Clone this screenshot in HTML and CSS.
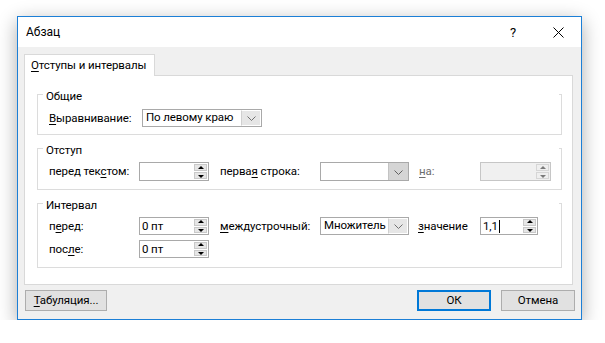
FILE: index.html
```html
<!DOCTYPE html>
<html lang="ru">
<head>
<meta charset="utf-8">
<title>Абзац</title>
<link rel="stylesheet" href="styles.css">
</head>
<body>
<div class="window">
  <div class="titlebar">
    <span class="title">Абзац</span>
    <span class="help">?</span>
    <svg class="close" width="11" height="11" viewBox="0 0 11 11"><path d="M0.5 0.5L10.5 10.5M10.5 0.5L0.5 10.5" stroke="#000" stroke-width="1" fill="none"/></svg>
  </div>
  <div class="content">
    <div class="tab"><u>О</u>тступы и интервалы</div>
    <div class="panel">
      <div class="group g1">
        <div class="legend">Общие</div>
        <div class="row r1">
          <span class="lbl l0"><u>В</u>ыравнивание:</span>
          <div class="combo c-align"><span class="val">По левому краю</span><span class="drop light"><svg width="9" height="5" viewBox="0 0 9 5"><path d="M0.5 0.5L4.5 4.5L8.5 0.5" stroke="#707070" fill="none"/></svg></span></div>
        </div>
      </div>
      <div class="group g2">
        <div class="legend">Отступ</div>
        <div class="row r2">
          <span class="lbl l1">перед тек<u>с</u>том:</span>
          <div class="spin"><span class="val"></span><span class="arrows"><span class="up"></span><span class="down"></span></span></div>
          <span class="lbl l2">перва<u>я</u> строка:</span>
          <div class="combo c-mid"><span class="val"></span><span class="drop dark"><svg width="9" height="5" viewBox="0 0 9 5"><path d="M0.5 0.5L4.5 4.5L8.5 0.5" stroke="#606060" fill="none"/></svg></span></div>
          <span class="lbl l3 disabled"><u>н</u>а:</span>
          <div class="spin wide off"><span class="val"></span><span class="arrows"><span class="up"></span><span class="down"></span></span></div>
        </div>
      </div>
      <div class="group g3">
        <div class="legend">Интервал</div>
        <div class="row r3">
          <span class="lbl l1">п<u>е</u>ред:</span>
          <div class="spin"><span class="val">0 пт</span><span class="arrows"><span class="up"></span><span class="down"></span></span></div>
          <span class="lbl l2"><u>м</u>еждустрочный:</span>
          <div class="combo c-mid"><span class="val">Множитель</span><span class="drop light"><svg width="9" height="5" viewBox="0 0 9 5"><path d="M0.5 0.5L4.5 4.5L8.5 0.5" stroke="#707070" fill="none"/></svg></span></div>
          <span class="lbl l4"><u>з</u>начение</span>
          <div class="spin narrow"><span class="val">1,1<span class="caret"></span></span><span class="arrows"><span class="up"></span><span class="down"></span></span></div>
        </div>
        <div class="row r4">
          <span class="lbl l1">пос<u>л</u>е:</span>
          <div class="spin"><span class="val">0 пт</span><span class="arrows"><span class="up"></span><span class="down"></span></span></div>
        </div>
      </div>
    </div>
    <div class="footer">
      <button class="btn tabs"><u>Т</u>абуляция...</button>
      <button class="btn ok">ОК</button>
      <button class="btn cancel">Отмена</button>
    </div>
  </div>
</div>
</body>
</html>
```

FILE: styles.css
```css
* { box-sizing: border-box; }
html, body { margin: 0; padding: 0; }
body {
  background: #ffffff;
  font-family: Roboto, "Noto Sans", sans-serif;
  font-size: 11.5px;
  letter-spacing: -0.1px;
  line-height: 15px;
  color: #000;
}
u { text-decoration: underline; text-underline-offset: 2px; }

.window {
  margin: 16px 0 0 17px;
  width: 565px;
  height: 304px;
  border: 1px solid #1c7fd6;
  background: #f0f0f0;
  box-shadow: 0 5px 18px rgba(0, 0, 0, 0.33);
  display: flex;
  flex-direction: column;
}

.titlebar {
  height: 30px;
  flex: none;
  background: #fff;
  display: flex;
  align-items: center;
  padding-left: 8px;
}
.title { flex: 1; font-size: 12px; letter-spacing: 0; }
.help {
  width: 10px;
  text-align: center;
  font-size: 13px;
  margin-right: 35px;
}
.close { margin-right: 17px; display: block; }

.content {
  flex: 1;
  padding: 7px 8px 0 6px;
  display: flex;
  flex-direction: column;
}

.tab {
  flex: none;
  align-self: flex-start;
  width: 131px;
  height: 22px;
  margin-bottom: -1px;
  border: 1px solid #d9d9d9;
  border-bottom: none;
  background: #fff;
  padding: 3px 0 0 6px;
  white-space: nowrap;
  position: relative;
  z-index: 1;
}

.panel {
  flex: none;
  width: 549px;
  height: 210px;
  border: 1px solid #d9d9d9;
  background: #fff;
  padding: 18px 0 0 12px;
  display: flex;
  flex-direction: column;
}

.group {
  flex: none;
  width: 525px;
  border: 1px solid #dcdcdc;
  border-top: none;
  position: relative;
  display: flex;
  flex-direction: column;
}
.group::before,
.group::after {
  content: "";
  position: absolute;
  top: 0;
  height: 1px;
  background: #dcdcdc;
}
.group::before { left: -1px; width: 6px; }
.group::after { right: -1px; width: 3px; }
.g1 { height: 41px; }
.g2 { height: 42px; margin-top: 13px; }
.g3 { height: 65px; margin-top: 13px; }

.legend {
  margin-top: -5px;
  padding-left: 8px;
  height: 15px;
  flex: none;
}

.row {
  flex: none;
  display: flex;
  align-items: center;
  padding-left: 11px;
}
.r1 { margin-top: 5px; height: 18px; }
.r2 { margin-top: 4px; height: 19px; }
.r3 { margin-top: 4px; height: 18px; }
.r4 { margin-top: 5px; height: 18px; }

.lbl { white-space: nowrap; flex: none; }
.l0 { width: 93px; }
.l1 { width: 90px; }
.l2 { width: 100px; margin-left: 11px; }
.l3 { width: 61px; margin-left: 10px; }
.l4 { width: 62px; margin-left: 9px; }
.disabled { color: #6d6d6d; }

.combo {
  flex: none;
  height: 100%;
  border: 1px solid #a9a9a9;
  background: #fff;
  display: flex;
}
.combo .val { flex: 1; padding-left: 3px; line-height: 15px; white-space: nowrap; overflow: hidden; }
.c-align { width: 120px; }
.c-mid { width: 89px; }
.drop {
  flex: none;
  width: 20px;
  display: flex;
  align-items: center;
  justify-content: center;
}
.drop.light { background: #e6e6e6; border: 1px solid #fff; border-left: 1px solid #d0d0d0; }
.drop.dark { background: #d5d5d5; border-left: 1px solid #c3c3c3; }
.drop svg { display: block; margin-top: 1px; }

.spin {
  flex: none;
  width: 70px;
  height: 100%;
  border: 1px solid #a9a9a9;
  background: #fff;
  display: flex;
}
.spin.wide { width: 71px; }
.spin.narrow { width: 58px; }
.spin .val { flex: 1; padding-left: 2px; line-height: 15px; display: flex; align-items: center; }
.caret { display: inline-block; width: 1px; height: 13px; background: #000; margin-left: 1px; }

.arrows {
  flex: none;
  width: 15px;
  padding: 1px;
  display: flex;
  flex-direction: column;
  gap: 1px;
}
.up, .down {
  flex: 1;
  background: #e6e6e6;
  border: 1px solid #c9c9c9;
  position: relative;
}
.up::after, .down::after {
  content: "";
  position: absolute;
  left: 50%;
  top: 50%;
  margin-left: -3px;
  border-left: 3px solid transparent;
  border-right: 3px solid transparent;
}
.up::after { border-bottom: 3px solid #000; margin-top: -2px; }
.down::after { border-top: 3px solid #000; margin-top: -1px; }
.off { background: #f0f0f0; border-color: #c6c6c6; }
.off .up, .off .down { background: #efefef; border-color: #d6d6d6; }
.off .up::after { border-bottom-color: #7a7a7a; }
.off .down::after { border-top-color: #7a7a7a; }

.footer {
  flex: none;
  margin-top: 5px;
  display: flex;
  padding-left: 1px;
}
.btn {
  height: 21px;
  font-family: inherit;
  font-size: 11.5px;
  letter-spacing: -0.1px;
  line-height: 15px;
  color: #000;
  background: #e1e1e1;
  border: 1px solid #adadad;
  padding: 0;
}
.btn.tabs { width: 82px; }
.btn.ok { width: 74px; margin-left: auto; border: 2px solid #0078d7; }
.btn.cancel { width: 74px; margin-left: 10px; margin-right: -2px; }
```
